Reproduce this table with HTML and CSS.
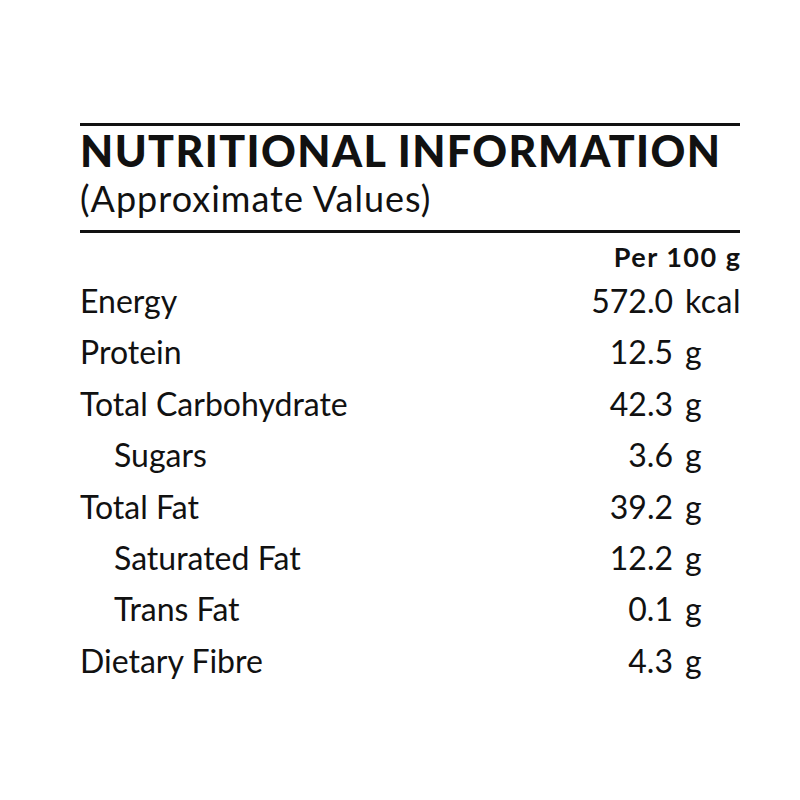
FILE: index.html
```html
<!DOCTYPE html>
<html>
<head>
<meta charset="utf-8">
<link rel="stylesheet" href="styles.css">
</head>
<body>
<div class="panel">
  <div class="rule"></div>
  <h1 class="title">NUTRITIONAL INFORMATION</h1>
  <div class="subtitle">(Approximate Values)</div>
  <div class="rule"></div>
  <div class="headval">Per 100 g</div>
  <div class="table">
    <div class="label">Energy</div><div class="num">572.0</div><div class="unit">kcal</div>
    <div class="label">Protein</div><div class="num">12.5</div><div class="unit">g</div>
    <div class="label">Total Carbohydrate</div><div class="num">42.3</div><div class="unit">g</div>
    <div class="label sub">Sugars</div><div class="num">3.6</div><div class="unit">g</div>
    <div class="label">Total Fat</div><div class="num">39.2</div><div class="unit">g</div>
    <div class="label sub">Saturated Fat</div><div class="num">12.2</div><div class="unit">g</div>
    <div class="label sub">Trans Fat</div><div class="num">0.1</div><div class="unit">g</div>
    <div class="label">Dietary Fibre</div><div class="num">4.3</div><div class="unit">g</div>
  </div>
</div>
</body>
</html>
```
FILE: styles.css
```css
html, body {
  margin: 0;
  background: #fff;
}
body {
  font-family: Lato, "Open Sans", sans-serif;
  color: #111;
}
.panel {
  width: 660px;
  margin: 123px 0 0 80px;
}
.rule {
  height: 3px;
  background: #111;
}
.title {
  margin: 0;
  font-size: 43px;
  font-weight: 900;
  line-height: 49px;
  letter-spacing: 1.4px;
  white-space: nowrap;
}
.subtitle {
  font-size: 36px;
  line-height: 47px;
  letter-spacing: 1px;
  margin-bottom: 8px;
}
.headval {
  margin-top: 5px;
  text-align: right;
  font-size: 27px;
  font-weight: 700;
  line-height: 37px;
  letter-spacing: 1.5px;
  margin-right: -1.5px;
}
.table {
  display: grid;
  grid-template-columns: 1fr auto 55px;
  column-gap: 12px;
  font-size: 32px;
  line-height: 51.4px;
}
.label.sub { padding-left: 34px; }
.num { text-align: right; }
.unit { text-align: left; white-space: nowrap; letter-spacing: 0.5px; }
```
